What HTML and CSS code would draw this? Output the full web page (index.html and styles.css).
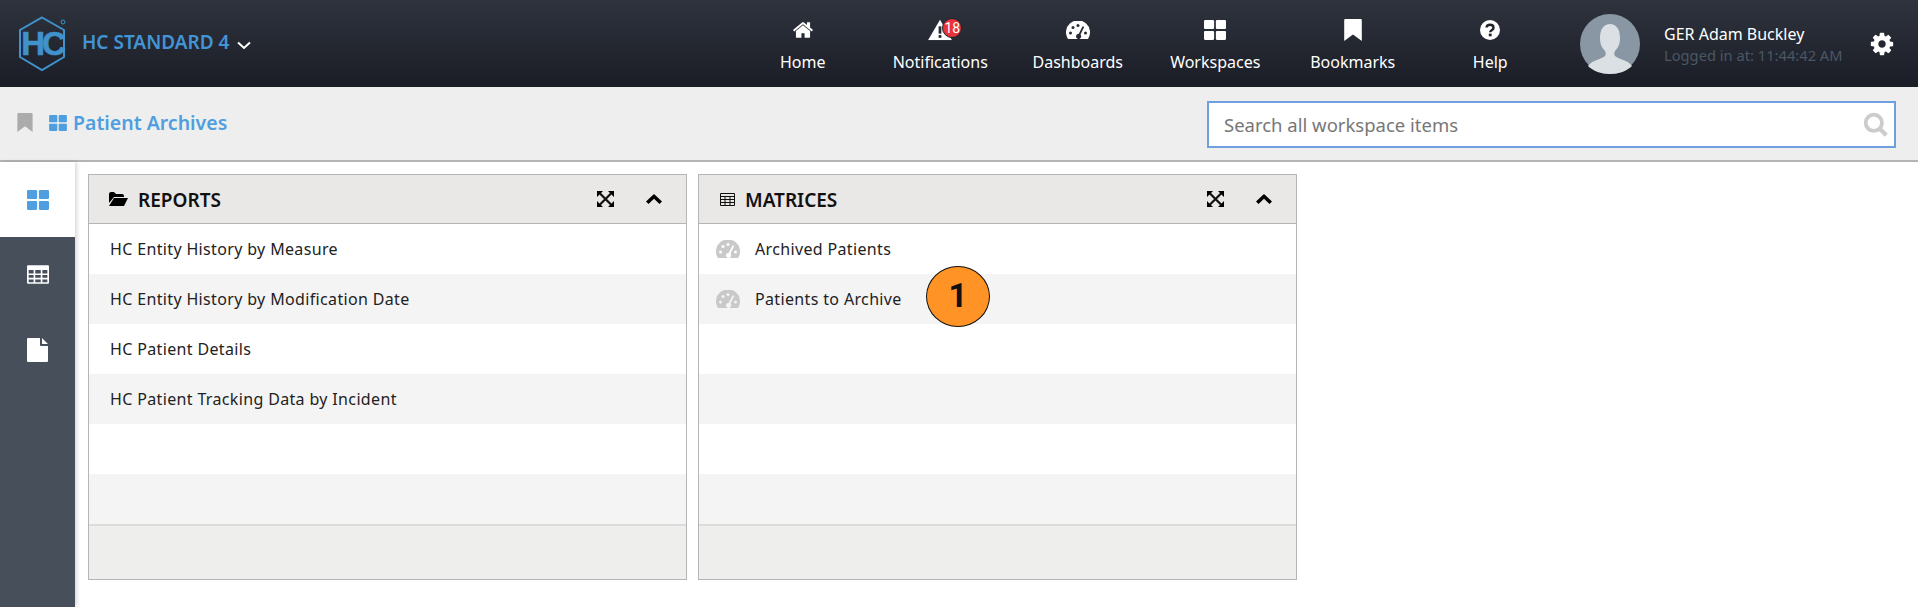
FILE: index.html
```html
<!DOCTYPE html>
<html lang="en">
<head>
  <meta charset="UTF-8" />
  <title>Patient Archives</title>
  <link rel="stylesheet" href="styles.css">
</head>
<body>

  <svg class="defs" width="0" height="0">
    <defs>
      <symbol id="i-home" viewBox="0 0 1792 1792"><path d="M1472 992v480q0 26-19 45t-45 19h-384v-384h-256v384h-384q-26 0-45-19t-19-45v-480q0-1 .5-3t.5-3l575-474 575 474q1 2 1 6zm223-69l-62 74q-8 9-21 11h-3q-13 0-21-7l-692-577-692 577q-12 8-24 7-13-2-21-11l-62-74q-8-10-7-23.500t11-21.500l719-599q32-26 76-26t76 26l244 204v-195q0-14 9-23t23-9h192q14 0 23 9t9 23v408l219 182q10 8 11 21.500t-7 23.500z"/></symbol>
      <symbol id="i-grid" viewBox="0 0 20 18"><rect x="0" y="0" width="9.200" height="8.200" rx="1"/><rect x="10.800" y="0" width="9.200" height="8.200" rx="1"/><rect x="0" y="9.800" width="9.200" height="8.200" rx="1"/><rect x="10.800" y="9.800" width="9.200" height="8.200" rx="1"/></symbol>
      <symbol id="i-bookmark" viewBox="0 0 16 20"><path d="M1 0h14a1 1 0 0 1 1 1v19l-8-6-8 6V1a1 1 0 0 1 1-1z"/></symbol>
      <symbol id="i-gear" viewBox="0 0 1792 1792"><path d="M1152 896q0-106-75-181t-181-75-181 75-75 181 75 181 181 75 181-75 75-181zm512-109v222q0 12-8 23t-20 13l-185 28q-19 54-39 91 35 50 107 138 10 12 10 25t-9 23q-27 37-99 108t-94 71q-12 0-26-9l-138-108q-44 23-91 38-16 136-29 186-7 28-36 28h-222q-14 0-24.500-8.500t-11.500-21.500l-28-184q-49-16-90-37l-141 107q-10 9-25 9-14 0-25-11-126-114-165-168-7-10-7-23 0-12 8-23 15-21 51-66.500t54-70.500q-27-50-41-99l-183-27q-13-2-21-12.500t-8-23.500v-222q0-12 8-23t19-13l186-28q14-46 39-92-40-57-107-138-10-12-10-24 0-10 9-23 26-36 98.500-107.500t94.500-71.500q13 0 26 10l138 107q44-23 91-38 16-136 29-186 7-28 36-28h222q14 0 24.500 8.500t11.500 21.500l28 184q49 16 90 37l142-107q9-9 24-9 13 0 25 10 129 119 165 170 7 8 7 22 0 12-8 23-15 21-51 66.500t-54 70.500q26 50 41 98l183 28q13 2 21 12.500t8 23.500z"/></symbol>
      <mask id="m-gauge">
        <rect width="24" height="18" fill="#fff"/>
        <g fill="#000">
          <circle cx="4.500" cy="12" r="1.500"/><circle cx="7" cy="6.500" r="1.500"/><circle cx="12" cy="4.500" r="1.500"/><circle cx="19.500" cy="12" r="1.500"/>
          <path d="M16.600 5.200l1.600.8-3.700 7.600a2.600 2.600 0 1 1-1.700-.8z"/>
        </g>
      </mask>
      <symbol id="i-gauge" viewBox="0 0 24 18"><path mask="url(#m-gauge)" d="M2 18A12 12 0 1 1 22 18z"/></symbol>
      <mask id="m-warn">
        <rect width="26" height="22" fill="#fff"/>
        <rect x="11.500" y="7" width="3" height="8" fill="#000"/>
        <rect x="11.500" y="16.500" width="3" height="3" fill="#000"/>
      </mask>
      <symbol id="i-warn" viewBox="0 0 26 22"><path mask="url(#m-warn)" d="M13 0L26 22H0z"/></symbol>
      <symbol id="i-table" viewBox="0 0 20 17"><path fill-rule="evenodd" d="M1 0h18a1 1 0 0 1 1 1v15a1 1 0 0 1-1 1H1a1 1 0 0 1-1-1V1a1 1 0 0 1 1-1zM1.500 4.500v3h4.500v-3zm6 0v3h5v-3zm6.500 0v3h4.500v-3zM1.500 9v2.500h4.500V9zm6 0v2.500h5V9zM14 9v2.500h4.500V9zM1.500 13v2.500h4.500V13zm6 0v2.500h5V13zM14 13v2.500h4.500V13z"/></symbol>
      <symbol id="i-expand" viewBox="0 0 17 16">
        <path d="M3 2.500l11 11M14 2.500l-11 11" fill="none" stroke="#111" stroke-width="2.200"/>
        <path d="M0 0h6L0 6zM17 0h-6l6 6zM0 16h6l-6-6zM17 16h-6l6-6z"/>
      </symbol>
      <symbol id="i-up" viewBox="0 0 16 10"><path d="M8 0l8 7.500L13.500 10 8 4.800 2.500 10 0 7.500z"/></symbol>
    </defs>
  </svg>

  <header class="topbar">
    <div class="brand">
      <svg class="logo" width="52" height="56" viewBox="0 0 52 56">
        <path d="M25 1.500L47 14v27L25 54 3 41V14z" fill="none" stroke="#3f92cc" stroke-width="2"/>
        <text class="logo-text" x="25" y="39" text-anchor="middle">HC</text>
        <circle cx="46" cy="6" r="2" fill="none" stroke="#3f92cc" stroke-width="1"/>
      </svg>
      <span class="brand-name">HC STANDARD 4</span>
      <svg class="brand-caret" width="14" height="9" viewBox="0 0 14 9"><path d="M1 1.500l6 5.500 6-5.500" fill="none" stroke="#fff" stroke-width="2"/></svg>
    </div>

    <nav class="nav">
      <a class="nav-item"><svg class="nav-icon" width="22" height="22"><use href="#i-home"/></svg>Home</a>
      <a class="nav-item">
        <span class="nav-alert">
          <svg class="nav-icon" width="24" height="22"><use href="#i-warn"/></svg>
          <span class="badge">18</span>
        </span>
        Notifications
      </a>
      <a class="nav-item"><svg class="nav-icon" width="24" height="22"><use href="#i-gauge"/></svg>Dashboards</a>
      <a class="nav-item"><svg class="nav-icon" width="22" height="22"><use href="#i-grid"/></svg>Workspaces</a>
      <a class="nav-item"><svg class="nav-icon" width="18" height="22"><use href="#i-bookmark"/></svg>Bookmarks</a>
      <a class="nav-item">
        <svg class="nav-icon" width="22" height="22" viewBox="0 0 22 22">
          <circle cx="11" cy="11" r="10"/>
          <path d="M7.500 8.500C7.700 6.500 9.200 5.700 11 5.700c2 0 3.500 1.200 3.500 3 0 2.600-3.300 2.500-3.300 4.600" fill="none" stroke="#20232c" stroke-width="2.400"/>
          <rect x="9.800" y="14.600" width="2.800" height="2.700" fill="#20232c"/>
        </svg>
        Help
      </a>
    </nav>

    <div class="user">
      <svg class="avatar" width="60" height="60" viewBox="0 0 60 60">
        <ellipse cx="30" cy="30" rx="30" ry="30" fill="#8996a3"/>
        <path d="M8 52c4-6 14-7 17-10 1-1 1-3 0-5-3-3-5-7-5-13 0-9 4-14 10-14s10 5 10 14c0 6-2 10-5 13-1 2-1 4 0 5 3 3 13 4 17 10-5 5-13 8-22 8S13 57 8 52z" fill="#dbe0e4"/>
      </svg>
      <div class="user-info">
        <div class="user-name">GER Adam Buckley</div>
        <div class="user-login">Logged in at: 11:44:42 AM</div>
      </div>
      <svg class="gear" width="26" height="26"><use href="#i-gear"/></svg>
    </div>
  </header>

  <div class="subbar">
    <svg class="sub-bookmark" width="16" height="19"><use href="#i-bookmark"/></svg>
    <svg class="sub-grid" width="18" height="16"><use href="#i-grid"/></svg>
    <span class="sub-title">Patient Archives</span>
    <div class="search">
      <input class="search-input" type="text" placeholder="Search all workspace items" />
      <svg class="search-icon" width="26" height="26" viewBox="0 0 24 24">
        <circle cx="10" cy="10" r="7.500" fill="none" stroke="#ccc" stroke-width="3.500"/>
        <path d="M15.500 15.500l6 6" stroke="#ccc" stroke-width="4"/>
      </svg>
    </div>
  </div>

  <div class="content">
    <aside class="sidebar">
      <div class="side-item active"><svg width="22" height="20"><use href="#i-grid"/></svg></div>
      <div class="side-item"><svg width="22" height="19"><use href="#i-table"/></svg></div>
      <div class="side-item">
        <svg width="21" height="24" viewBox="0 0 21 24"><path d="M1 0h12v7a1 1 0 0 0 1 1h7v15a1 1 0 0 1-1 1H1a1 1 0 0 1-1-1V1a1 1 0 0 1 1-1zM15 0l6 6h-6z"/></svg>
      </div>
    </aside>

    <main class="panels">
      <section class="panel">
        <div class="panel-head">
          <svg class="head-icon folder" width="19" height="16" viewBox="0 0 19 16"><path d="M0 3a2 2 0 0 1 2-2h3l2 2h6a2 2 0 0 1 2 2v1H5L0 12zM5 7h14l-4 8H0z"/></svg>
          <span class="panel-title">REPORTS</span>
          <svg class="head-action" width="17" height="16"><use href="#i-expand"/></svg>
          <svg class="head-action up" width="16" height="10"><use href="#i-up"/></svg>
        </div>
        <div class="row">HC Entity History by Measure</div>
        <div class="row">HC Entity History by Modification Date</div>
        <div class="row">HC Patient Details</div>
        <div class="row">HC Patient Tracking Data by Incident</div>
        <div class="row"></div>
        <div class="row"></div>
        <div class="panel-foot"></div>
      </section>

      <section class="panel">
        <div class="panel-head matrices">
          <svg class="head-icon" width="15" height="13" viewBox="0 0 15 13">
            <path d="M.5.500h14v12H.5zM.5 3.500h14M.5 6.500h14M.5 9.500h14M5 3.500v9M10 3.500v9" fill="none" stroke="#111" stroke-width="1"/>
          </svg>
          <span class="panel-title">MATRICES</span>
          <svg class="head-action" width="17" height="16"><use href="#i-expand"/></svg>
          <svg class="head-action up" width="16" height="10"><use href="#i-up"/></svg>
        </div>
        <div class="row with-icon"><svg class="row-icon" width="24" height="18"><use href="#i-gauge"/></svg>Archived Patients</div>
        <div class="row with-icon"><svg class="row-icon" width="24" height="18"><use href="#i-gauge"/></svg>Patients to Archive</div>
        <div class="row"></div>
        <div class="row"></div>
        <div class="row"></div>
        <div class="row"></div>
        <div class="panel-foot"></div>
        <div class="callout">1</div>
      </section>
    </main>
  </div>

</body>
</html>
```

FILE: styles.css
```css
* {
  margin: 0;
  padding: 0;
  box-sizing: border-box;
}

html, body {
  height: 607px;
  overflow: hidden;
}

body {
  font-family: 'Noto Sans', sans-serif;
  background-color: #fff;
  color: #222;
}

.defs {
  position: absolute;
}

.topbar {
  display: flex;
  align-items: center;
  height: 87px;
  background: linear-gradient(#2f333d, #1a1d26);
  color: #fff;
}

.brand {
  display: flex;
  align-items: center;
  width: 734px;
  padding-left: 17px;
}

.logo-text {
  font-family: 'Liberation Sans', sans-serif;
  font-weight: 700;
  font-size: 33px;
  letter-spacing: -3px;
  fill: #3f92cc;
  stroke: #3f92cc;
  stroke-width: 0.6px;
}

.brand-name {
  margin-left: 13px;
  margin-bottom: 4px;
  font-size: 19px;
  font-weight: 600;
  color: #4294d6;
}

.brand-caret {
  margin-left: 8px;
  margin-top: 4px;
}

.nav {
  display: flex;
}

.nav-item {
  display: flex;
  flex-direction: column;
  align-items: center;
  width: 137.5px;
  padding-top: 3px;
  font-size: 16px;
  line-height: 20px;
  color: #fff;
}

.nav-icon {
  display: block;
  height: 22px;
  margin-bottom: 11px;
  fill: #fff;
}

.nav-alert {
  position: relative;
  display: block;
}

.badge {
  position: absolute;
  top: -1px;
  left: 14px;
  width: 20px;
  height: 20px;
  border: 1px solid #1f222b;
  border-radius: 50%;
  background: #e8333c;
  font-family: Roboto, sans-serif;
  font-size: 14px;
  line-height: 18px;
  text-align: center;
}

.user {
  display: flex;
  align-items: center;
  margin-left: 21px;
}

.user-info {
  width: 205px;
  margin-left: 24px;
}

.user-name {
  font-size: 16px;
  line-height: 22px;
}

.user-login {
  font-size: 14.7px;
  line-height: 20px;
  color: #4b5764;
}

.gear {
  fill: #fff;
}

.subbar {
  display: flex;
  align-items: center;
  height: 75px;
  padding-left: 17px;
  background-color: #eee;
  border-bottom: 2px solid #b5b5b5;
}

.sub-bookmark {
  margin-bottom: 2px;
  fill: #ababab;
}

.sub-grid {
  margin-left: 16px;
  margin-bottom: 2px;
  fill: #4f9fe0;
}

.sub-title {
  margin-left: 6px;
  margin-bottom: 2px;
  font-size: 19.5px;
  font-weight: 600;
  color: #4f9fe0;
}

.search {
  position: relative;
  width: 689px;
  margin-left: auto;
  margin-right: 22px;
  margin-top: 2px;
}

.search-input {
  display: block;
  width: 100%;
  height: 47px;
  padding: 0 50px 0 15px;
  border: 2px solid #6f9fe0;
  background: #fff;
  font-family: 'Noto Sans', sans-serif;
  font-size: 18.5px;
  color: #333;
}

.search-input::placeholder {
  color: #777;
  opacity: 1;
}

.search-icon {
  position: absolute;
  top: 11px;
  right: 7px;
}

.content {
  display: flex;
  height: 445px;
}

.sidebar {
  width: 75px;
  background-color: #474f5b;
  box-shadow: 2px 0 4px rgba(0, 0, 0, 0.15);
}

.side-item {
  display: flex;
  align-items: center;
  justify-content: center;
  height: 75px;
  fill: #fff;
}

.side-item.active {
  background-color: #fff;
  fill: #4f9fe0;
}

.panels {
  display: flex;
  gap: 11px;
  padding: 12px 0 0 13px;
}

.panel {
  position: relative;
  width: 599px;
  height: 406px;
  border: 1px solid #b5b5b5;
}

.panel-head {
  display: flex;
  align-items: center;
  height: 49px;
  padding-left: 20px;
  background-color: #e9e8e6;
  border-bottom: 1px solid #b5b5b5;
}

.head-icon {
  margin-right: 10px;
}

.matrices {
  padding-left: 21px;
}

.panel-title {
  flex: 1;
  padding-top: 1px;
  font-size: 19px;
  font-weight: 600;
  color: #111;
}

.head-action {
  margin-right: 32px;
}

.head-action.up {
  margin-right: 24px;
}

.row {
  display: flex;
  align-items: center;
  height: 50px;
  padding-left: 21px;
  padding-bottom: 1px;
  font-size: 16px;
  letter-spacing: 0.35px;
  color: #222;
}

.row:nth-of-type(odd) {
  background-color: #f4f4f4;
}

.row-icon {
  margin-right: 15px;
  fill: #c9c9c9;
}

.with-icon {
  padding-left: 17px;
}

.panel-foot {
  height: 55px;
  background-color: #eeeeec;
  border-top: 2px solid #dcdcda;
}

.callout {
  position: absolute;
  top: 91px;
  left: 227px;
  width: 64px;
  height: 61px;
  border: 1.5px solid #111;
  border-radius: 50%;
  background-color: #ff9326;
  font-family: Roboto, sans-serif;
  font-size: 33px;
  font-weight: 700;
  line-height: 58px;
  text-align: center;
  color: #111;
}
```
